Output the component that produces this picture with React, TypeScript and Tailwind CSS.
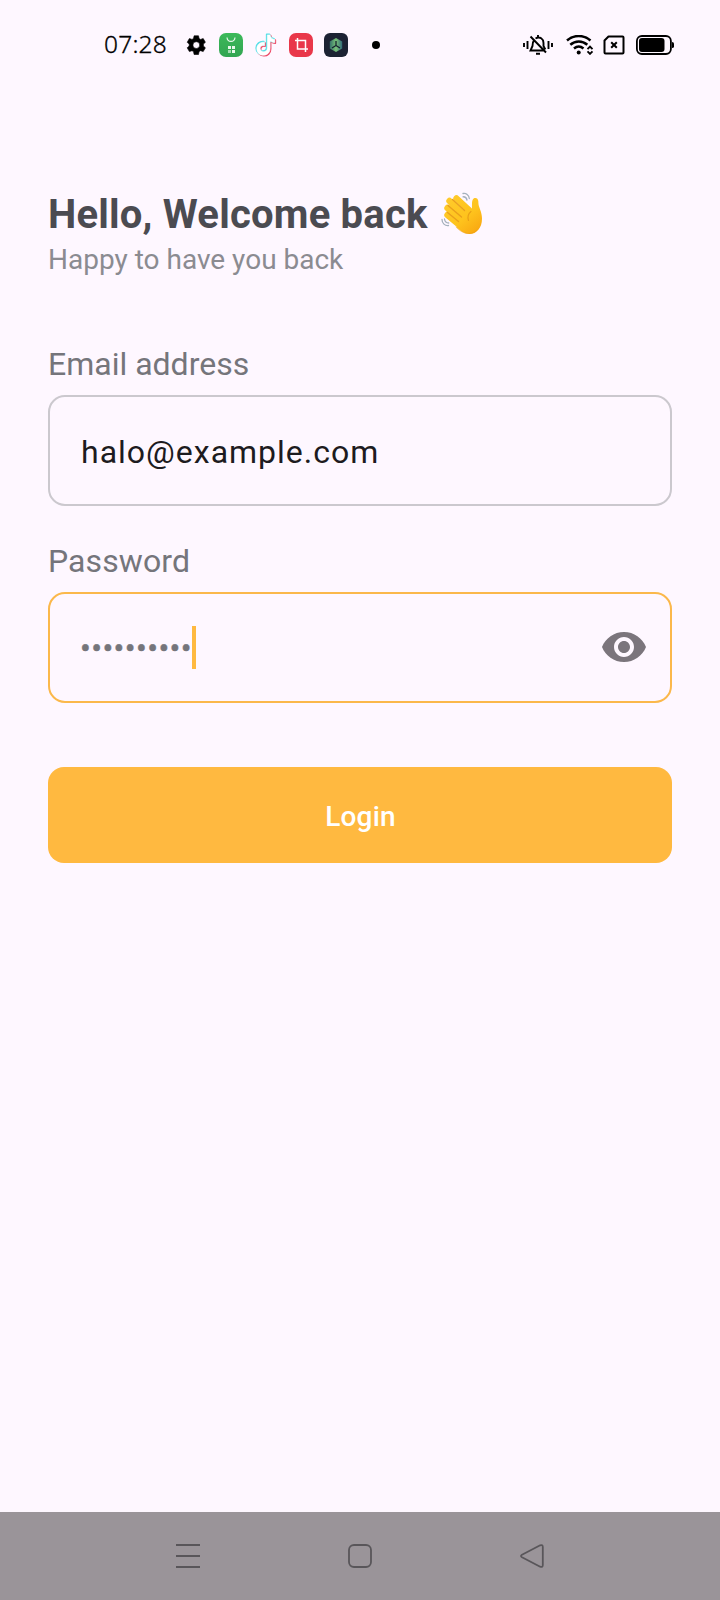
function SettingsIcon() {
  return (
    <svg className="size-6" viewBox="0 0 24 24" fill="#000">
      <path
        fillRule="evenodd"
        d="M9.8 2h4.4l.6 2.7 1.5.9 2.6-.9 2.2 3.8-2 1.8v1.9l2 1.8-2.2 3.8-2.6-.9-1.5.9-.6 2.9H9.800l-.6-2.9-1.500-.9-2.600.9L2.900 14l2-1.800v-1.900l-2-1.800L5.100 4.700l2.600.9 1.500-.9zM12 7.900a3.400 3.400 0 1 0 0 6.800 3.400 3.400 0 0 0 0-6.800z"
        transform="translate(.3 .8)"
        stroke="#000"
        strokeWidth="0.6"
        strokeLinejoin="round"
      />
    </svg>
  );
}

function StoreIcon() {
  return (
    <svg className="size-6" viewBox="0 0 24 24">
      <defs>
        <linearGradient id="store" x1="0" y1="0" x2="0" y2="1">
          <stop offset="0" stopColor="#3cb95a" />
          <stop offset="1" stopColor="#32a552" />
        </linearGradient>
      </defs>
      <rect width="24" height="24" rx="7" fill="url(#store)" />
      <path d="M8 4.500c.5 5.200 7.500 5.200 8 0" fill="none" stroke="#e9f8ec" strokeWidth="1.200" />
      <path d="M9 13h3v3H9zM13 13h3v3h-3zM13 17h3v3h-3z" fill="#e9f8ec" />
      <path d="M9 17h3v3H9z" fill="#a5dcb2" />
    </svg>
  );
}

function NoteIcon() {
  const note =
    "M13 1.500h2.800c.3 2.600 2 4.300 4.700 4.600v3.100c-1.800 0-3.400-.6-4.700-1.500v7.300c0 9-13.300 9.200-13.300.3 0-4.200 3.500-7 7.800-6.400v3.400c-2.500-.7-4.500.7-4.500 2.900 0 4.300 7.200 4.200 7.200-.6z";
  return (
    <svg className="size-6" viewBox="0 0 24 24" strokeWidth="1.500" strokeLinejoin="round">
      <path d={note} fill="#ed4966" stroke="#ed4966" transform="translate(.9 1)" />
      <path d={note} fill="#55dfe6" stroke="#55dfe6" transform="translate(-.4 -.3)" />
      <path d={note} fill="#fff" stroke="#fff" strokeWidth="0.500" transform="translate(.3 .4)" />
    </svg>
  );
}

function CropIcon() {
  return (
    <svg className="size-6" viewBox="0 0 24 24">
      <rect width="24" height="24" rx="7" fill="#e9374a" />
      <path d="M8.500 5v11H19M6 7.500h10.500V19" fill="none" stroke="#fff" strokeWidth="1.500" />
    </svg>
  );
}

function CubeIcon() {
  return (
    <svg className="size-6" viewBox="0 0 24 24">
      <defs>
        <linearGradient id="cube" x1="0" y1="0" x2="1" y2="0">
          <stop offset="0" stopColor="#35716a" />
          <stop offset="0.5" stopColor="#79c277" />
          <stop offset="1" stopColor="#326b79" />
        </linearGradient>
      </defs>
      <rect width="24" height="24" rx="6" fill="#1c2233" />
      <path d="M12 5l6.200 3.500v7L12 19l-6.200-3.500v-7z" fill="url(#cube)" />
      <path d="M12 8v4.500L8 15M12 12.500l4 2.500" fill="none" stroke="#152030" strokeWidth="1.300" />
    </svg>
  );
}

function WavingHand() {
  return (
    <svg className="h-[42px] w-[42px]" viewBox="0 0 42 42" fill="none" strokeLinecap="round" strokeLinejoin="round" role="img" aria-label="Waving hand">
      <defs>
        <linearGradient id="hand" x1="6" y1="4" x2="36" y2="40" gradientUnits="userSpaceOnUse">
          <stop offset="0" stopColor="#ffcb2c" />
          <stop offset="0.6" stopColor="#fec31d" />
          <stop offset="1" stopColor="#f9a811" />
        </linearGradient>
      </defs>
      <path d="M22 1.500c3-.8 6 1.500 6.300 5M22 4.800c2-.2 3.500 1 4 3.200M1 27.500c0 3.800 3 6.500 6.500 6M3.500 27c.3 2.300 2 4 4.200 4" stroke="#a5b1bd" strokeWidth="1.300" />
      <g stroke="url(#hand)" strokeWidth="6.400">
        <path d="M15.500 6.500L28 18M8.500 9L25 25M6.500 16L22 29M6.500 23L21 35" />
      </g>
      <path
        d="M24 14L30 19.500c1.200-1 .9-4.500 1-8 .1-3 .8-5.500 3.200-5.500 2.500 0 3.300 2.300 3.200 5 0 4 3.600 8.500 3.600 15.500C41 36 35.500 42 28.500 42c-5 0-9-3-13-7z"
        fill="url(#hand)"
      />
      <path d="M11.500 7.500L23.500 18.500M7 13.500L20.500 25M6.500 20.500L17.500 29.500" stroke="#e9a01c" strokeWidth="1.400" />
      <path d="M30 19.500c-3.200 2.500-3.800 5-2.500 9" stroke="#e9a016" strokeWidth="1.200" />
      <path d="M15 35c7 8 16 8.500 21 3" stroke="#ee9c12" strokeWidth="1" opacity=".5" />
    </svg>
  );
}

function StatusBar() {
  return (
    <header className="flex h-[90px] items-center pl-[104px] pr-[45px]">
      <span className="-mt-0.5 w-20 font-['Noto_Sans',sans-serif] text-[24.500px] font-[350] leading-none tracking-[0.200px] text-black [-webkit-text-stroke:0.3px_black]">
        07:28
      </span>
      <div className="flex items-center gap-[11px]">
        <SettingsIcon />
        <StoreIcon />
        <NoteIcon />
        <CropIcon />
        <CubeIcon />
      </div>
      <span className="ml-6 size-2 rounded-full bg-black" />
      <div className="ml-auto flex items-center">
        <svg width="30" height="20" viewBox="0 0 30 20" fill="none" stroke="#000" strokeWidth="1.900">
          <path d="M1 8v4M4.500 6v8M25.500 6v8M29 8v4" />
          <path d="M11 5.500C9.500 7 9.500 8 9.500 11L7.500 15.500h13M12.500 3.500C17 1 20.500 4 20.500 8v3l1.800 3.500M15 0v2.500M7.500 1.500l15.500 16M13 18.800h4" />
        </svg>
        <svg className="ml-[13px]" width="28" height="20" viewBox="0 0 28 20" fill="none" stroke="#000">
          <path d="M1 5.500c7-6 16.500-6 23.500 0M4.300 9.700c5-4.300 12-4.300 17 0M8 13.500c3-2.500 6.500-2.500 9.500 0" strokeWidth="2.500" />
          <circle cx="12.700" cy="17.500" r="2" fill="#000" stroke="none" />
          <path d="M21.500 14.200l2.500-2.500 2.500 2.500M21.500 16.300l2.500 2.500 2.500-2.500" strokeWidth="1.900" />
        </svg>
        <svg className="ml-[9px]" width="22" height="20" viewBox="0 0 22 20" fill="none" stroke="#000" strokeWidth="2">
          <path d="M5.500 1.500h14q1 0 1 1v15q0 1-1 1h-17q-1 0-1-1V5.500z" strokeLinejoin="round" />
          <path d="M8.200 7.200l5.600 5.600M13.800 7.200l-5.600 5.600" />
        </svg>
        <svg className="ml-[11px]" width="39" height="20" viewBox="0 0 39 20">
          <rect x="0.900" y="1" width="34" height="18" rx="5" fill="none" stroke="#000" strokeWidth="1.800" />
          <rect x="3" y="3" width="25.500" height="14" rx="3" />
          <path d="M36 7q2 0 2 1.500v3q0 1.500-2 1.500z" />
        </svg>
      </div>
    </header>
  );
}

function NavigationBar() {
  return (
    <nav className="mt-auto flex h-[88px] items-center justify-between bg-[#9a9499] px-[176px]">
      <svg className="size-6" viewBox="0 0 24 24" stroke="#59565a" strokeWidth="2">
        <path d="M0 1h24M0 12h24M0 23h24" />
      </svg>
      <svg className="size-6" viewBox="0 0 24 24" fill="none" stroke="#59565a" strokeWidth="1.800">
        <rect x="1" y="1" width="22" height="22" rx="5" />
      </svg>
      <svg className="size-6" viewBox="0 0 24 24" fill="none" stroke="#59565a" strokeWidth="1.800" strokeLinejoin="round">
        <path d="M20.200 1.300L2 10.700q-2 1.300 0 2.600l18.200 9.400q2.600 1 2.600-1.700V3q0-2.700-2.600-1.700z" />
      </svg>
    </nav>
  );
}

export default function App() {
  return (
    <div className="flex h-[1600px] w-[720px] flex-col bg-[#fef7ff] font-[Roboto,sans-serif]">
      <StatusBar />
      <main className="flex flex-col px-12 pt-[101px]">
        <h1 className="flex h-12 items-center text-[40px] font-bold leading-[48px] tracking-[0.2px] text-[#4b4b51]">
          <span className="w-[393px] whitespace-nowrap">Hello, Welcome back</span>
          <span className="-mt-1">
            <WavingHand />
          </span>
        </h1>
        <p className="mt-px h-10 text-[28px] leading-10 text-[#8b8b91]">Happy to have you back</p>
        <label className="mt-16 h-10 text-[32px] leading-10 text-[#75757b]">Email address</label>
        <div className="mt-[11px] flex h-[111px] items-center rounded-[17px] border-2 border-[#cbc8ce] px-[31px] pt-0.5">
          <span className="text-[32px] leading-10 tracking-[1px] text-[#1d1b20]">halo@example.com</span>
        </div>
        <label className="mt-[35px] h-10 text-[32px] leading-10 tracking-[0.1px] text-[#75757b]">Password</label>
        <div className="mt-[11px] flex h-[111px] items-center rounded-[17px] border-2 border-[#fbb84b] pl-[30px] pr-[22px]">
          <span className="text-[32px] leading-10 tracking-[0.400px] text-[#75757b] [-webkit-text-stroke:0.4px_#75757b]">••••••••••</span>
          <span className="h-[43px] w-1 bg-[#ffb940]" />
          <svg className="mb-0.5 ml-auto size-12" viewBox="0 0 24 24" fill="#7b757c">
            <path d="M12 4.500C7 4.500 2.730 7.610 1 12c1.730 4.390 6 7.500 11 7.500s9.270-3.110 11-7.500c-1.730-4.390-6-7.500-11-7.500zM12 17c-2.760 0-5-2.240-5-5s2.240-5 5-5 5 2.240 5 5-2.240 5-5 5zm0-8c-1.660 0-3 1.340-3 3s1.340 3 3 3 3-1.340 3-3-1.340-3-3-3z" />
          </svg>
        </div>
        <button className="mt-16 h-24 rounded-2xl bg-[#ffb940] pl-px pt-[3px] text-[28px] font-medium tracking-[0.200px] text-white">
          Login
        </button>
      </main>
      <NavigationBar />
    </div>
  );
}
